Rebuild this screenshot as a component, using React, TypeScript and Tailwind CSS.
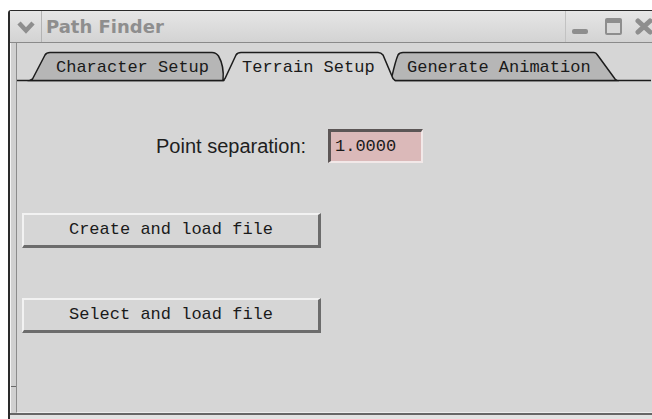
import React from 'react'

const mono = { fontFamily: '"Liberation Mono", "DejaVu Sans Mono", monospace' }

// Notebook tabs are drawn in page coordinates (viewBox is offset to the panel origin).
function TabStrip() {
  return (
    <svg
      className="absolute left-0 top-0"
      width={634}
      height={40}
      viewBox="18 43 634 40"
    >
      {/* baseline under the whole strip */}
      <line x1={18} y1={80.5} x2={652} y2={80.5} stroke="#1c1c1c" strokeWidth={1.6} />
      {/* Generate Animation (inactive) */}
      <path
        d="M392,80.5 C394,72 396,62 399,55 Q400.5,52.5 404,52.5 L595,52.5 Q597,52.5 598.5,55 L616,79 L618,80.5 Z"
        fill="#b6b6b6"
        stroke="#1c1c1c"
        strokeWidth={1.5}
      />
      {/* Character Setup (inactive) */}
      <path
        d="M31,80.5 L33.5,79 L46,55 Q47.5,52.5 51,52.5 L213,52.5 Q217,52.5 219.5,56 C223,62 225,70 224,80.5 Z"
        fill="#b6b6b6"
        stroke="#1c1c1c"
        strokeWidth={1.5}
      />
      {/* Terrain Setup (active) – fill hides the baseline below it */}
      <path
        d="M225,82 L237,55 Q238.5,52.5 242,52.5 L379,52.5 Q382,52.5 384,55 L396,82 Z"
        fill="#d6d6d6"
      />
      <path
        d="M224,80.5 L226,78.5 L237,55 Q238.5,52.5 242,52.5 L379,52.5 Q382,52.5 384,55 L394,78.5 L396,80.5"
        fill="none"
        stroke="#1c1c1c"
        strokeWidth={1.5}
      />
    </svg>
  )
}

function RaisedButton({ label }: { label: string }) {
  return (
    <button
      className="ml-[5px] w-[299px] h-[35px] bg-[#d6d6d6] border-t-2 border-l-2 border-b-[3px] border-r-[3px] border-t-[#f2f2f2] border-l-[#f2f2f2] border-b-[#6c6c6c] border-r-[#6c6c6c] text-[17px] leading-[20px] text-[#1a1a1a] flex items-center justify-center"
      style={mono}
    >
      {label}
    </button>
  )
}

export default function App() {
  return (
    <div className="w-[652px] h-[419px] bg-white overflow-hidden pt-[10px] pl-[8px]">
      <div className="w-[650px] h-[409px] flex flex-col border-t border-l-2 border-[#2a2a2a] rounded-tl-[3px] bg-[#d0d0d0]">
        {/* title bar */}
        <div className="h-[32px] flex items-stretch border-b border-[#8a8a8a] bg-gradient-to-b from-[#e6e6e6] to-[#d3d3d3]">
          <div className="w-[32px] flex items-center justify-center border-r border-[#b4b4b4]">
            <svg width={20} height={14} viewBox="0 0 20 14">
              <polyline
                points="3,3 10,10.5 17,3"
                fill="none"
                stroke="#8e8e8e"
                strokeWidth={4.5}
                strokeLinejoin="miter"
              />
            </svg>
          </div>
          <div
            className="ml-[4px] flex items-center text-[18px] font-bold text-[#8e8e8e]"
            style={{ fontFamily: '"DejaVu Sans", Verdana, sans-serif' }}
          >
            Path Finder
          </div>
          <div className="flex-1" />
          <div className="w-[93px] border-l border-[#c2c2c2] flex items-center">
            {/* minimize */}
            <div className="ml-[6px] mt-[9px] w-[16px] h-[5px] rounded-[2px] bg-[#8e8e8e]" />
            {/* maximize */}
            <div className="ml-[17px] w-[17px] h-[17px] border-2 border-t-[5px] border-[#8e8e8e] rounded-[2px] bg-[#d8d8d8]" />
            {/* close */}
            <svg className="ml-[13px]" width={18} height={17} viewBox="0 0 18 17">
              <path d="M3,3 L15,14 M15,3 L3,14" stroke="#8e8e8e" strokeWidth={5} strokeLinecap="round" />
            </svg>
          </div>
        </div>

        {/* body: left frame + notebook panel */}
        <div className="flex-1 flex">
          <div className="w-[6px] flex flex-col border-l border-[#f4f4f4]">
            <div className="flex-1" />
            <div className="h-px bg-[#6a6a6a] mb-[26px]" />
          </div>
          <div className="flex-1 flex flex-col bg-[#d6d6d6] border-l border-[#8c8c8c] border-b border-b-[#ececec]">
            <div className="relative h-[40px]">
              <TabStrip />
              <div className="relative flex pl-[39px] pt-[15px] text-[17px] leading-[20px] text-[#1a1a1a]" style={mono}>
                <span className="w-[186px]">Character Setup</span>
                <span className="w-[165px]">Terrain Setup</span>
                <span>Generate Animation</span>
              </div>
            </div>

            <div className="mt-[46px] flex items-center pl-[139px]">
              <span
                className="w-[172px] text-[20px] leading-[24px] text-[#1e1e1e]"
                style={{ fontFamily: '"Liberation Sans", Arial, sans-serif' }}
              >
                Point separation:
              </span>
              <div
                className="w-[95px] h-[34px] flex items-center pl-[4px] bg-[#dbb9b9] border-t-[3px] border-l-[3px] border-b-2 border-r-2 border-t-[#5c5656] border-l-[#5c5656] border-b-[#f2e8e8] border-r-[#f2e8e8] text-[17px] text-[#1a1a1a]"
                style={mono}
              >
                1.0000
              </div>
            </div>

            <div className="mt-[50px]">
              <RaisedButton label="Create and load file" />
            </div>
            <div className="mt-[50px]">
              <RaisedButton label="Select and load file" />
            </div>
          </div>
        </div>
        <div className="h-[6px] border-t-2 border-[#666666] bg-[#e2e2e2]" />
      </div>
    </div>
  )
}
